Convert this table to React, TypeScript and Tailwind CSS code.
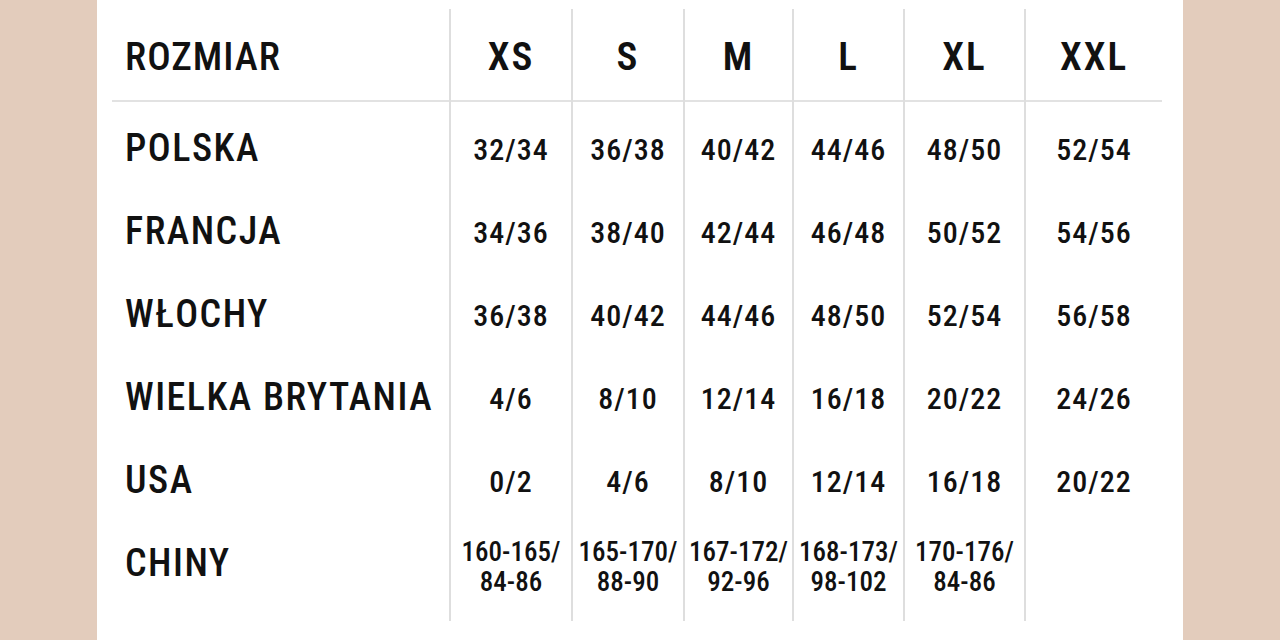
const sizes = ['XS', 'S', 'M', 'L', 'XL', 'XXL'];

const rows = ['POLSKA', 'FRANCJA', 'WŁOCHY', 'WIELKA BRYTANIA', 'USA', 'CHINY'];

const columns = [
  { width: 'w-[122px]', values: ['32/34', '34/36', '36/38', '4/6', '0/2', '160-165/\n84-86'] },
  { width: 'w-[112px]', values: ['36/38', '38/40', '40/42', '8/10', '4/6', '165-170/\n88-90'] },
  { width: 'w-[109px]', values: ['40/42', '42/44', '44/46', '12/14', '8/10', '167-172/\n92-96'] },
  { width: 'w-[111px]', values: ['44/46', '46/48', '48/50', '16/18', '12/14', '168-173/\n98-102'] },
  { width: 'w-[121px]', values: ['48/50', '50/52', '52/54', '20/22', '16/18', '170-176/\n84-86'] },
  { width: 'w-[138px]', values: ['52/54', '54/56', '56/58', '24/26', '20/22', ''] },
];

function ValueCell({ value }: { value: string }) {
  const twoLines = value.includes('\n');
  return (
    <div className="h-[83px] flex items-center justify-center pt-[5px]">
      {twoLines ? (
        <span className="whitespace-pre text-center text-[27px] leading-[30px] font-medium pt-[3px]">{value}</span>
      ) : (
        <span className="text-[30px] leading-none font-medium tracking-[1px]">{value}</span>
      )}
    </div>
  );
}

export default function App() {
  return (
    <div className="w-[1280px] h-[640px] bg-[#e3ccbc] overflow-hidden">
      <div
        className="mx-[97px] h-full bg-white pl-[15px] pr-[21px] pt-[9px] text-[#111] font-stretch-condensed"
        style={{ fontFamily: '"Roboto Condensed", Roboto, "Liberation Sans", sans-serif' }}
      >
        <div className="flex">
          <div className="w-[337px] flex flex-col">
            <div className="h-[93px] flex items-center pl-[13px] pt-[5px] border-b-2 border-[#e2e2e2]">
              <span className="text-[39px] leading-none font-medium tracking-[1px]">ROZMIAR</span>
            </div>
            <div className="pt-[4px] pb-[17px]">
              {rows.map((r) => (
                <div key={r} className="h-[83px] flex items-center pl-[13px]">
                  <span className="text-[38px] leading-none font-medium tracking-[1.5px]">{r}</span>
                </div>
              ))}
            </div>
          </div>
          {columns.map((c, i) => (
            <div key={sizes[i]} className={`${c.width} flex flex-col border-l-2 border-[#dedede]`}>
              <div className="h-[93px] flex items-center justify-center pt-[5px] border-b-2 border-[#e2e2e2]">
                <span className="text-[39px] leading-none font-semibold tracking-[2px]">{sizes[i]}</span>
              </div>
              <div className="pt-[4px] pb-[17px]">
                {c.values.map((v, j) => (
                  <ValueCell key={j} value={v} />
                ))}
              </div>
            </div>
          ))}
        </div>
      </div>
    </div>
  );
}
